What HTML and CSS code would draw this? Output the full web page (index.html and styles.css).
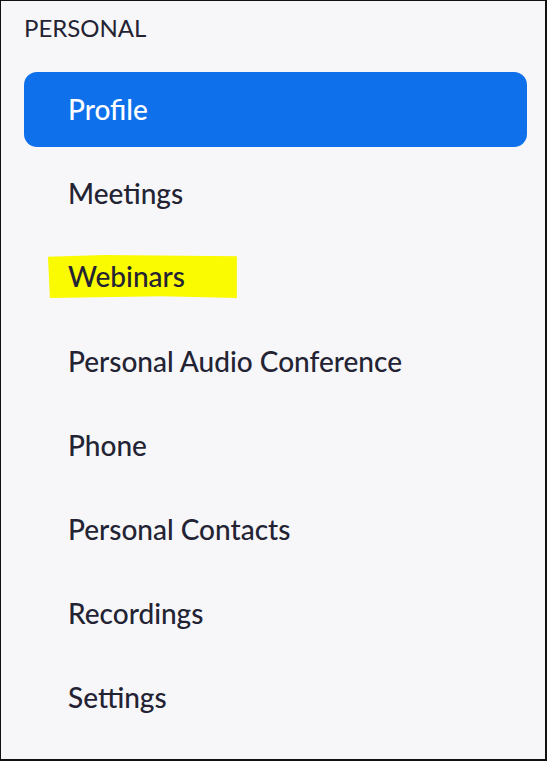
FILE: index.html
```html
<!DOCTYPE html>
<html lang="en">
<head>
<meta charset="utf-8">
<title>Personal</title>
<link rel="stylesheet" href="styles.css">
</head>
<body>
<nav class="panel">
  <div class="section-title">PERSONAL</div>
  <ul class="menu">
    <li class="item active">Profile</li>
    <li class="item">Meetings</li>
    <li class="item"><span class="marker">Webinars</span></li>
    <li class="item">Personal Audio Conference</li>
    <li class="item">Phone</li>
    <li class="item">Personal Contacts</li>
    <li class="item">Recordings</li>
    <li class="item">Settings</li>
  </ul>
</nav>
</body>
</html>
```
FILE: styles.css
```css
html, body {
  margin: 0;
  padding: 0;
}
body {
  width: 547px;
  height: 761px;
  font-family: Lato, "Open Sans", sans-serif;
  color: #232333;
  background: #f7f7fa;
}
.panel {
  box-sizing: border-box;
  width: 547px;
  height: 761px;
  border-style: solid;
  border-color: #111;
  border-width: 1px 2px 2px 1px;
  background: #f7f7fa;
  padding: 0 18px 0 23px;
}
.section-title {
  font-size: 24px;
  line-height: 28px;
  padding-top: 13px;
}
.menu {
  list-style: none;
  margin: 30px 0 0 0;
  padding: 0;
  display: flex;
  flex-direction: column;
  gap: 9px;
}
.item {
  box-sizing: border-box;
  height: 75px;
  display: flex;
  align-items: center;
  padding: 0 0 2px 44px;
  font-size: 28px;
  font-weight: 500;
  border-radius: 13px;
}
.item.active {
  background: #0e71eb;
  color: #fff;
}
.marker {
  background: #fafa00;
  margin-left: -20px;
  padding: 4px 52px 5px 20px;
  clip-path: polygon(0 4%, 30% 0, 100% 3%, 100% 100%, 60% 96%, 1% 100%);
}
```
